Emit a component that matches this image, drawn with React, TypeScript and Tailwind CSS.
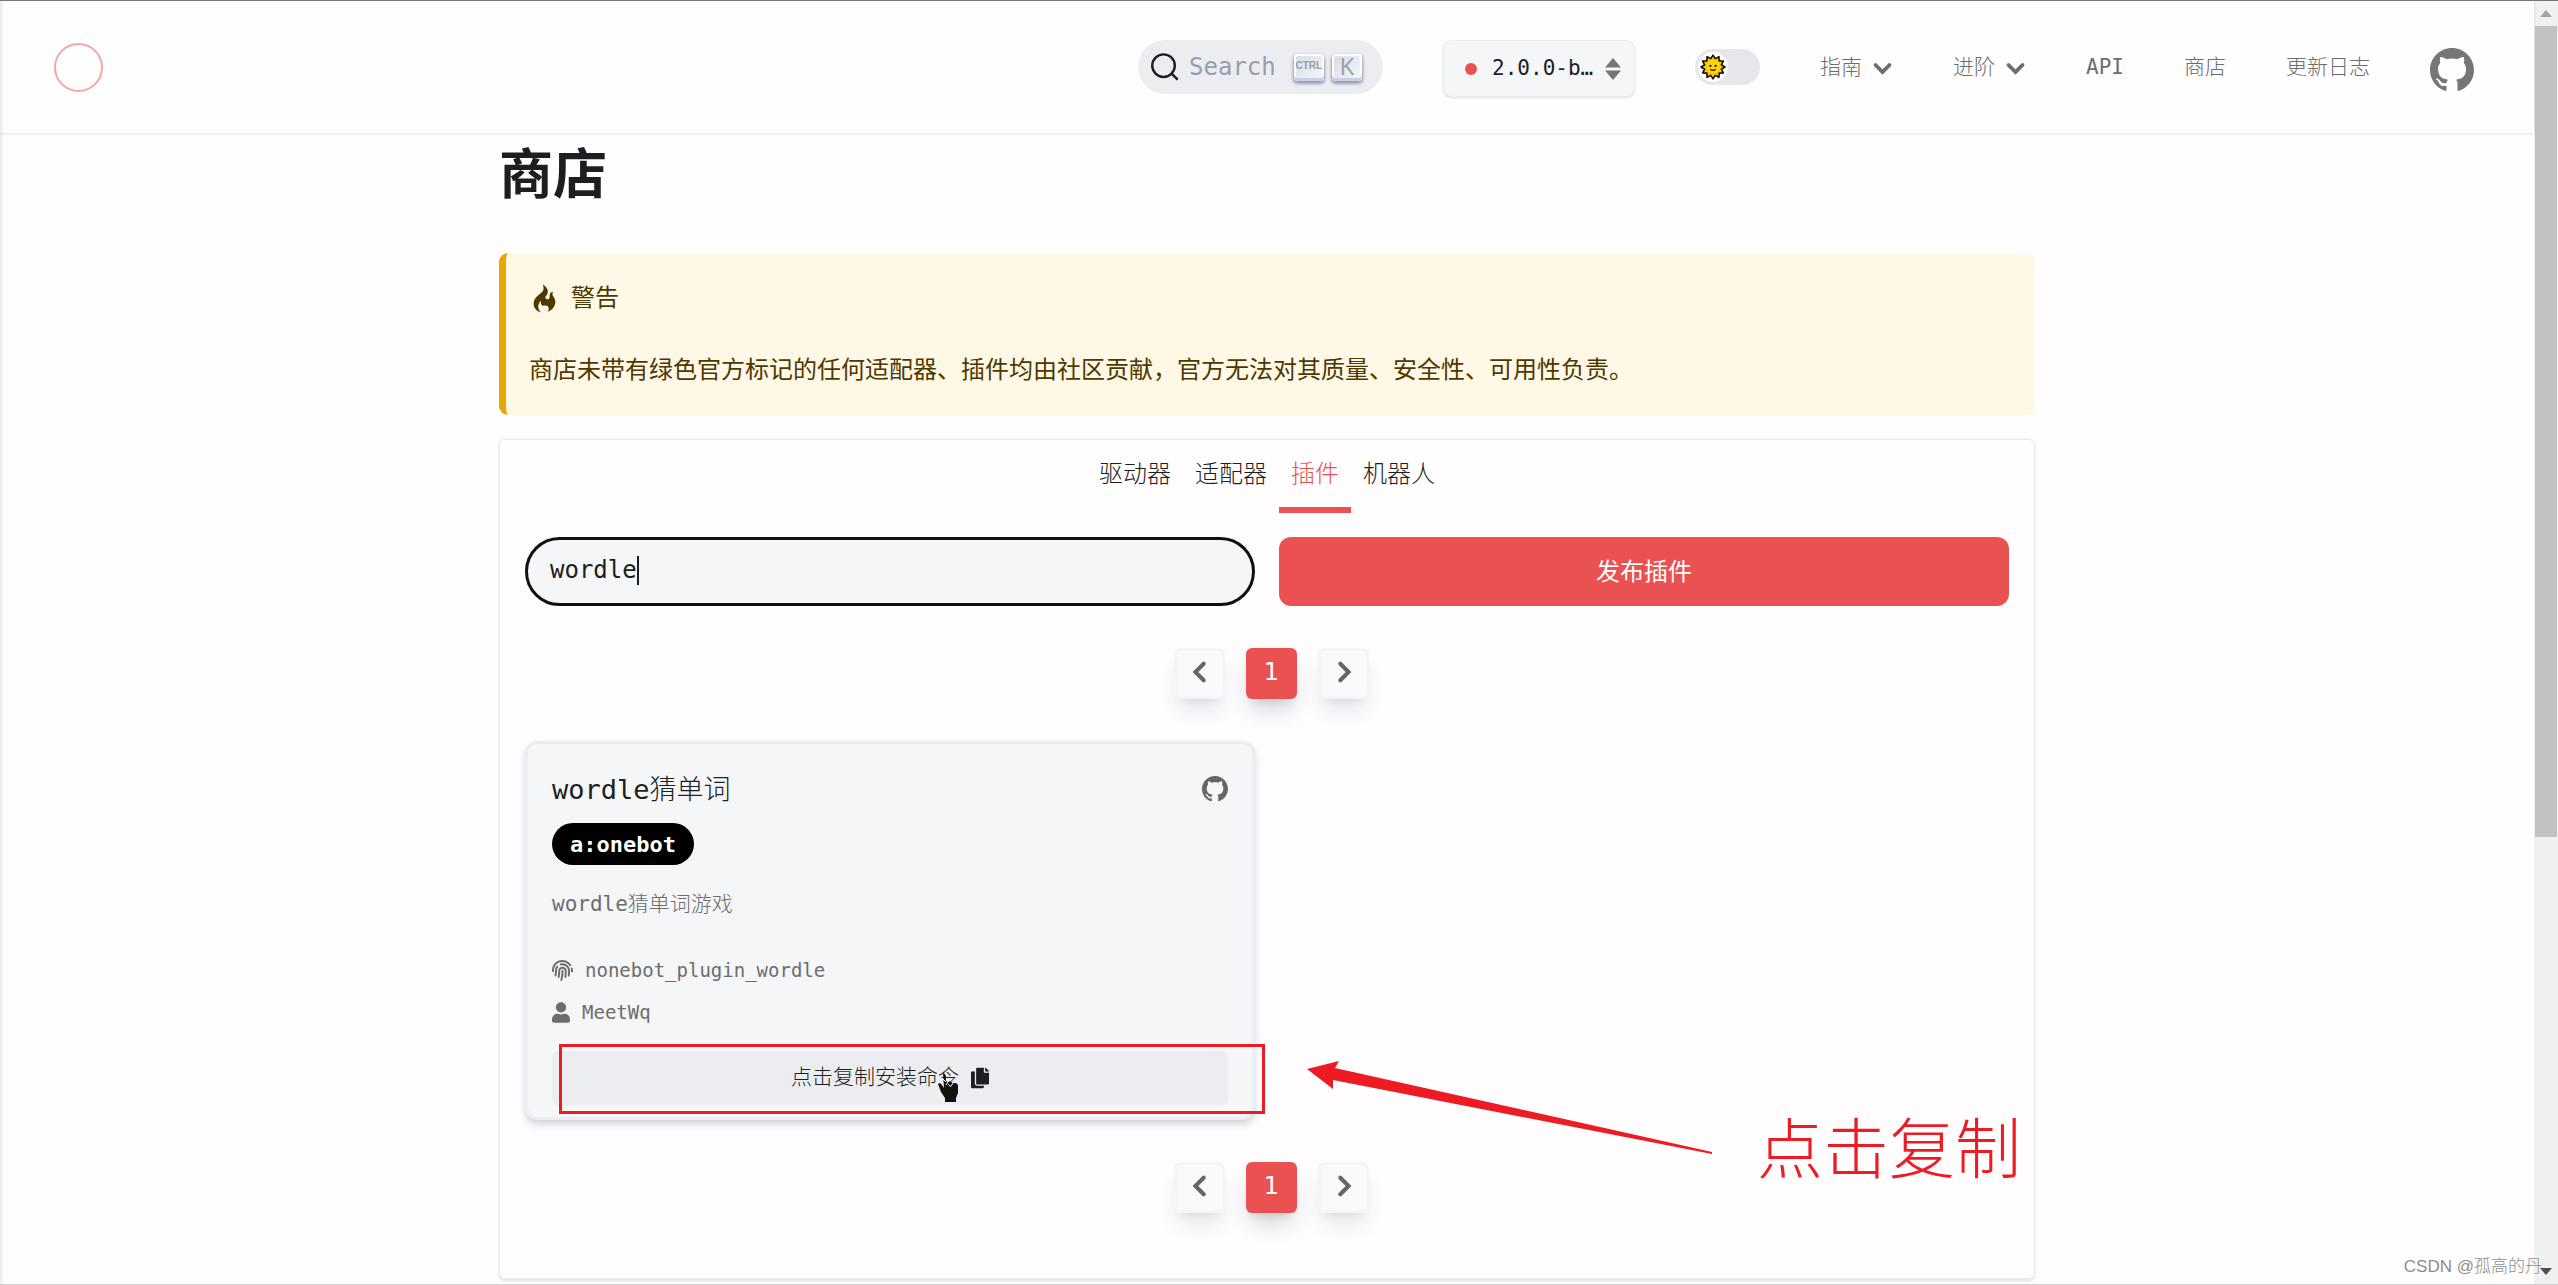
import React, { useState } from "react";
import { FaCopy, FaFingerprint, FaUser } from "react-icons/fa";

type IconProps = {
  className?: string;
};

type PluginType = {
  name: string;
  tag: string;
  desc: string;
  module: string;
  author: string;
};

const TABS = ["驱动器", "适配器", "插件", "机器人"];

const PLUGIN: PluginType = {
  name: "wordle猜单词",
  tag: "a:onebot",
  desc: "wordle猜单词游戏",
  module: "nonebot_plugin_wordle",
  author: "MeetWq",
};

const CHEVRONS = {
  down: "M4 8l8 8 8-8",
  left: "M16 3l-9 9 9 9",
  right: "M8 3l9 9-9 9",
};

// 12 rays around the face
const SUN_POINTS = Array.from({ length: 24 }, (_, i) => {
  const r = i % 2 === 0 ? 11 : 8;
  const a = (i * Math.PI) / 12;
  return `${12 + r * Math.sin(a)},${12 - r * Math.cos(a)}`;
}).join(" ");

const Chevron = ({
  dir,
  className,
}: IconProps & { dir: keyof typeof CHEVRONS }) => (
  <svg
    viewBox="0 0 24 24"
    fill="none"
    stroke="currentColor"
    strokeWidth="4.4"
    strokeLinecap="round"
    className={className}
  >
    <path d={CHEVRONS[dir]} />
  </svg>
);

const Github = ({ className }: IconProps) => (
  <svg viewBox="0 0 16 16" fill="currentColor" className={className}>
    <path d="M8 0C3.58 0 0 3.58 0 8c0 3.54 2.29 6.53 5.47 7.59.4.07.55-.17.55-.38 0-.19-.01-.82-.01-1.49-2.01.37-2.53-.49-2.69-.94-.09-.23-.48-.94-.82-1.13-.28-.15-.68-.52-.01-.53.63-.01 1.08.58 1.23.82.72 1.21 1.87.87 2.33.66.07-.52.28-.87.51-1.07-1.78-.2-3.64-.89-3.64-3.95 0-.87.31-1.59.82-2.15-.08-.2-.36-1.02.08-2.12 0 0 .67-.21 2.2.82.64-.18 1.32-.27 2-.27.68 0 1.36.09 2 .27 1.53-1.04 2.2-.82 2.2-.82.44 1.1.16 1.92.08 2.12.51.56.82 1.27.82 2.15 0 3.07-1.87 3.75-3.65 3.95.29.25.54.73.54 1.48 0 1.07-.01 1.93-.01 2.2 0 .21.15.46.55.38A8.013 8.013 0 0016 8c0-4.42-3.58-8-8-8z" />
  </svg>
);

const Fire = ({ className }: IconProps) => (
  <svg viewBox="0 0 12 16" fill="currentColor" className={className}>
    <path d="M5.05.31c.81 2.17.41 3.38-.52 4.31C3.55 5.67 1.98 6.45.9 7.98c-1.45 2.05-1.7 6.53 3.53 7.7-2.2-1.16-2.67-4.52-.3-6.61-.61 2.03.53 3.33 1.94 2.86 1.39-.47 2.3.53 2.27 1.67-.02.78-.31 1.44-1.13 1.81 3.42-.59 4.78-3.42 4.78-5.56 0-2.84-2.53-3.22-1.25-5.61-1.52.13-2.03 1.13-1.89 2.75.09 1.08-1.02 1.8-1.86 1.33-.67-.41-.66-1.19-.06-1.78C8.18 5.31 8.68 2.45 5.05.32L5.03.3l.02.01z" />
  </svg>
);

const Sun = ({ className }: IconProps) => (
  <svg viewBox="0 0 24 24" className={className}>
    <polygon
      points={SUN_POINTS}
      fill="#ffc700"
      stroke="#111"
      strokeWidth="1.5"
      strokeLinejoin="round"
    />
    <circle cx="12" cy="12" r="6" fill="#ffd60a" />
    <circle cx="9.6" cy="11" r="1" fill="#111" />
    <circle cx="14.4" cy="11" r="1" fill="#111" />
    <path d="M9.5 14q2.5 2.4 5 0" fill="none" stroke="#111" strokeWidth="1.1" />
  </svg>
);

const HandCursor = ({ className }: IconProps) => (
  <svg viewBox="0 0 22 32" className={className}>
    <path
      d="M6 2h1l2 3v6l3-1 4 2 3 0 2 2v8l-2 5v4H8v-4l-4-6-3-8 2-1 2 2 2 3z"
      fill="#14120d"
    />
    <path
      d="M6 8l3 3M9 7l3 4M12 9l-3 5M11 13l3 3M16 12l-2 3"
      fill="none"
      stroke="#fff"
      strokeWidth="1"
    />
  </svg>
);

const Key = ({ children }: { children: React.ReactNode }) => (
  <kbd className="flex h-[27px] w-[30px] items-center justify-center rounded-[4px] bg-gradient-to-br from-[#d5dbe4] to-[#f8f8f8] pb-[3px] font-normal text-[#969faf] shadow-[inset_0_-3px_0_0_#cdcde6,inset_0_0_1px_2px_#fff,0_2px_3px_1px_rgba(30,35,90,0.4)]">
    {children}
  </kbd>
);

const Header = () => {
  const [light, setLight] = useState(true);

  return (
    <header className="relative flex h-[132px] items-center justify-between bg-[#fefefe] pr-[60px] pl-[54px] text-[21px] text-[#6c6d6e] shadow-[0_1px_3px_rgba(0,0,0,0.12)]">
      <a
        href="#home"
        aria-label="NoneBot"
        className="h-[49px] w-[49px] rounded-full border-2 border-[#f7a5a5]"
      />

      <nav className="flex items-center gap-[60px]">
        <button
          type="button"
          className="flex h-[54px] w-[245px] items-center rounded-full bg-[#ebedf0] pl-3 text-[24px] text-[#969faf]"
        >
          <svg
            viewBox="0 0 20 20"
            fill="none"
            stroke="#1c1e21"
            strokeWidth="1.6"
            className="mr-[9px] h-[30px] w-[30px]"
          >
            <path d="M14.386 14.386l4.088 4.088-4.088-4.088A7.533 7.533 0 1 1 3.733 3.733a7.533 7.533 0 0 1 10.653 10.653z" />
          </svg>
          <span className="mr-[18px]">Search</span>
          <span className="flex gap-2">
            <Key>
              <span className="font-['Liberation_Sans_Narrow','Liberation_Sans'] text-[10px] font-bold">
                CTRL
              </span>
            </Key>
            <Key>
              <span className="font-['Open_Sans'] text-[24px]">K</span>
            </Key>
          </span>
        </button>

        <label className="mt-[3px] flex h-[57px] w-[192px] items-center rounded-[9px] border border-[#ebedf0] bg-[#f5f6f8] pl-[21px] text-[#1c1e21] shadow-sm">
          <span className="mr-[15px] h-3 w-3 rounded-full bg-[#ea5252]" />
          <select
            aria-label="版本"
            className="w-[104px] appearance-none bg-transparent outline-none"
          >
            <option>2.0.0-b…</option>
          </select>
          <svg
            viewBox="0 0 16 22"
            fill="#757677"
            className="ml-[9px] h-[22px] w-4"
          >
            <path d="M8 0l8 9.500H0zM8 22l8-9.500H0z" />
          </svg>
        </label>

        <label className="relative flex">
          <input
            type="checkbox"
            aria-label="切换主题"
            checked={light}
            onChange={() => setLight(!light)}
            className="h-9 w-[65px] appearance-none rounded-full bg-[#e5e7eb]"
          />
          <span className="pointer-events-none absolute top-[3px] left-[3px] flex h-[30px] w-[30px] items-center justify-center rounded-full bg-white">
            <Sun className="h-[26px] w-[26px]" />
          </span>
        </label>

        <div className="flex items-center gap-[60px] pt-[2px]">
          <a href="#guide" className="flex items-center gap-[10px]">
            指南 <Chevron dir="down" className="h-[21px] w-[21px]" />
          </a>
          <a href="#advanced" className="flex items-center gap-[10px]">
            进阶 <Chevron dir="down" className="h-[21px] w-[21px]" />
          </a>
          <a href="#api">API</a>
          <a href="#store">商店</a>
          <a href="#changelog">更新日志</a>
          <a href="#github" aria-label="GitHub">
            <Github className="mt-1 h-11 w-11 text-[#757677]" />
          </a>
        </div>
      </nav>
    </header>
  );
};

const Paginate = () => (
  <div className="mt-[42px] flex justify-center gap-[21px] pl-[9px] text-[24px] text-[#666]">
    <button
      type="button"
      aria-label="上一页"
      className="flex h-[51px] w-[51px] items-center justify-center rounded-md border-3 border-[#f4f5f6] bg-[#fafafa] pb-[3px] shadow-[0_15px_22px_-4px_rgba(40,60,80,0.12),0_6px_9px_-6px_rgba(40,60,80,0.12)]"
    >
      <Chevron dir="left" className="h-[22px] w-[22px]" />
    </button>
    <button
      type="button"
      className="h-[51px] w-[51px] rounded-md bg-[#ea5252] pb-[3px] font-['DejaVu_Sans'] font-normal text-white shadow-[0_15px_22px_-4px_rgba(40,60,80,0.2),0_6px_9px_-6px_rgba(40,60,80,0.2)]"
    >
      1
    </button>
    <button
      type="button"
      aria-label="下一页"
      className="flex h-[51px] w-[51px] items-center justify-center rounded-md border-3 border-[#f4f5f6] bg-[#fafafa] pb-[3px] shadow-[0_15px_22px_-4px_rgba(40,60,80,0.12),0_6px_9px_-6px_rgba(40,60,80,0.12)]"
    >
      <Chevron dir="right" className="h-[22px] w-[22px]" />
    </button>
  </div>
);

const PluginCard = ({ data }: { data: PluginType }) => (
  <div className="rounded-xl border-3 border-[#ebedf0] bg-[#f5f6f8] px-6 pt-6 pb-3 text-[#6c6d6e] shadow-[0_6px_9px_-1px_rgba(40,60,80,0.15),0_3px_6px_-1px_rgba(40,60,80,0.1)]">
    <div className="flex items-center justify-between">
      <h2 className="text-[27px] leading-[44px] text-[#1c1e21]">{data.name}</h2>
      <a href="#repo" aria-label="GitHub" className="pb-[3px]">
        <Github className="h-[26px] w-[26px] text-[#666]" />
      </a>
    </div>
    <span className="mt-[11px] flex h-[42px] w-fit items-center rounded-full bg-black px-[18px] text-[22px] font-bold text-white">
      {data.tag}
    </span>
    <p className="mt-[21px] text-[21px] leading-9">{data.desc}</p>
    <div className="mt-[33px] flex items-center gap-3 text-[19px] leading-[30px]">
      <FaFingerprint className="h-[21px] w-[21px]" />
      {data.module}
    </div>
    <div className="mt-3 flex items-center gap-3 text-[19px] leading-[30px]">
      <FaUser className="h-[21px] w-[18px]" />
      {data.author}
    </div>
    <div className="relative mt-6">
      <button
        type="button"
        className="flex h-[54px] w-full items-center justify-center gap-3 rounded-md bg-[#ebedf0] text-[21px] text-[#1c1e21]"
      >
        点击复制安装命令
        <FaCopy className="h-[22px] w-[18px]" />
      </button>
      <HandCursor className="absolute top-5 left-[57%] h-8 w-[22px]" />
      <div className="pointer-events-none absolute -top-[7px] -right-[37px] -bottom-[9px] left-[7px] border-3 border-[#ed1c24]" />
    </div>
  </div>
);

const Store = () => {
  const [tab, setTab] = useState("插件");
  const [filter, setFilter] = useState("wordle");

  return (
    <section className="rounded-md border border-b-2 border-[#e6e8ea] px-[25px] pb-[65px] text-[24px] text-[#1c1e21] shadow-sm">
      <div className="flex justify-center">
        {TABS.map((item) => (
          <button
            key={item}
            type="button"
            onClick={() => setTab(item)}
            className={
              item === tab
                ? "h-[73px] border-b-6 border-[#ea5252] px-3 text-[#ea5252]"
                : "h-[73px] border-b-6 border-transparent px-3"
            }
          >
            {item}
          </button>
        ))}
      </div>

      <div className="mt-6 grid grid-cols-2 gap-6">
        <div className="relative">
          <input
            aria-label="搜索插件"
            value={filter}
            onChange={(e) => setFilter(e.target.value)}
            className="h-[69px] w-full rounded-full bg-[#f5f6f8] px-[25px] pb-[3px] outline-3 -outline-offset-3 outline-[#101010]"
          />
          {/* text caret */}
          <span className="absolute top-[19px] left-[112px] h-[29px] w-0.5 bg-[#1c1e21]" />
        </div>
        <button
          type="button"
          className="h-[69px] rounded-xl bg-[#ea5252] font-normal text-white"
        >
          发布插件
        </button>
      </div>

      <Paginate />

      <div className="relative mt-[42px] grid grid-cols-2 gap-6">
        <PluginCard data={PLUGIN} />
        {/* red note pointing at the copy button */}
        <div className="absolute top-[320px] left-1/2 ml-10 flex items-start text-[#ed1c24]">
          <svg
            viewBox="0 0 406 93"
            fill="currentColor"
            className="h-[93px] w-[406px] shrink-0"
          >
            <path d="M0 8L32 0L28 7L405 91V93L26 19V28z" />
          </svg>
          <span className="mt-[54px] ml-[44px] text-[66px] leading-[72px] whitespace-nowrap">
            点击复制
          </span>
        </div>
      </div>

      <Paginate />
    </section>
  );
};

const Scrollbar = () => (
  <div className="flex w-6 shrink-0 flex-col items-center justify-between bg-[#f0f0f0] pb-[9px]">
    <div className="flex flex-col items-center gap-[9px] self-stretch px-px pt-[9px]">
      <svg viewBox="0 0 12 7" fill="#a3a3a3" className="h-[7px] w-3">
        <path d="M6 0l6 7H0z" />
      </svg>
      <div className="h-[811px] w-full bg-[#c1c1c1]" />
    </div>
    <svg viewBox="0 0 12 7" fill="#505050" className="h-[7px] w-3">
      <path d="M6 7l6-7H0z" />
    </svg>
  </div>
);

const App = () => {
  return (
    <div className="relative flex min-h-screen overflow-hidden border-t border-b border-t-[#77757c] border-b-[#d0d0d0] bg-[#fffdfe] font-['DejaVu_Sans_Mono','Noto_Sans_CJK_SC',monospace] font-light">
      <div className="flex-1">
        <Header />
        <main className="mx-auto w-full max-w-[1536px]">
          <h1 className="pt-[3px] text-[54px] leading-[80px] font-bold text-[#1c1e21]">
            商店
          </h1>
          <div className="mt-[37px] mb-6 rounded-[9px] border-l-7 border-[#e6a700] bg-[#fff8e6] py-[27px] pl-[23px] text-[24px] leading-9 font-normal text-[#4d3800]">
            <h5 className="flex items-center gap-[14px]">
              <Fire className="ml-[3px] h-[29px] w-[25px]" />
              警告
            </h5>
            <p className="mt-9">
              商店未带有绿色官方标记的任何适配器、插件均由社区贡献，官方无法对其质量、安全性、可用性负责。
            </p>
          </div>
          <Store />
        </main>
      </div>
      <Scrollbar />
      {/* soft shade along the window edge */}
      <div className="pointer-events-none absolute inset-y-0 left-0 w-1 bg-gradient-to-r from-black/8 to-transparent" />
      <div className="absolute right-4 bottom-1 font-['Liberation_Sans','Noto_Sans_CJK_SC',sans-serif] text-[17px] leading-[26px] text-[#8d8d8d]">
        CSDN @孤高的丹
      </div>
    </div>
  );
};

export default App;
